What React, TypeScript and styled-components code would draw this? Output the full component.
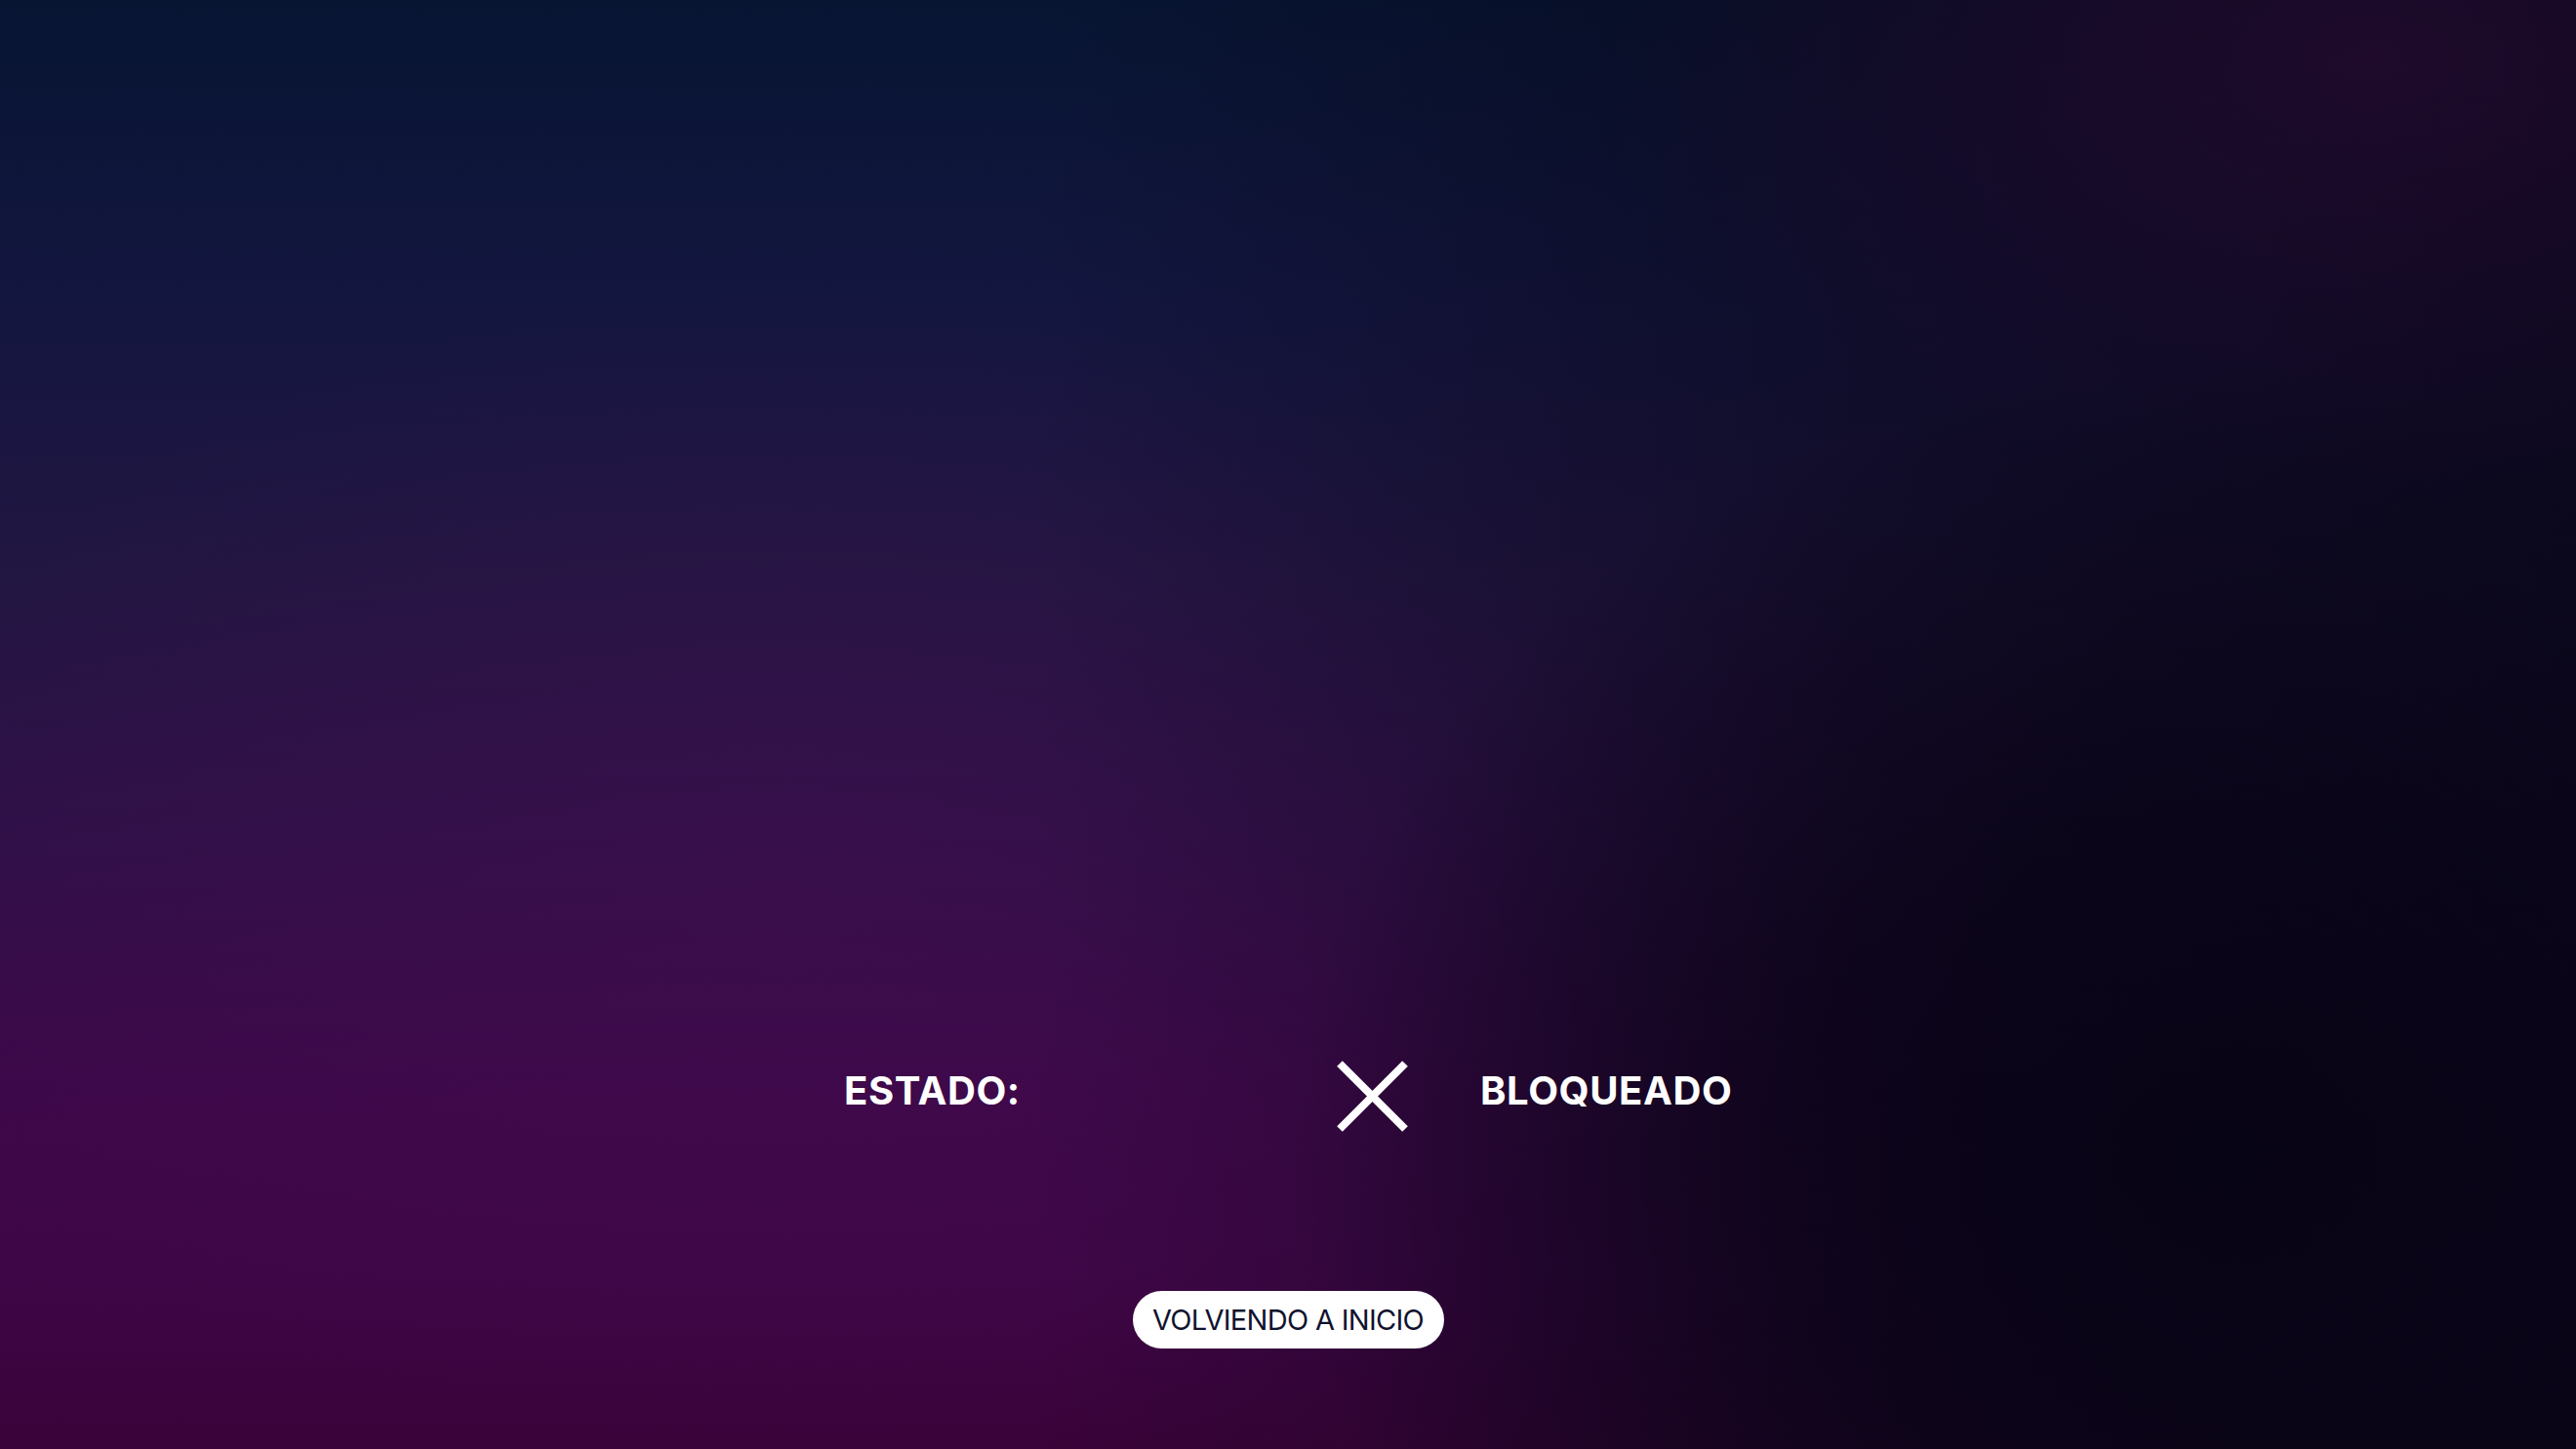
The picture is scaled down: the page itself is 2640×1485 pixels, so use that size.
import React from "react";
import styled, { createGlobalStyle } from "styled-components";

const GlobalStyle = createGlobalStyle`
  html, body, #root {
    margin: 0;
    padding: 0;
    width: 100%;
    height: 100%;
  }
  body {
    font-family: "Inter", "Liberation Sans", sans-serif;
    overflow: hidden;
  }
`;

const Screen = styled.main`
  width: 100vw;
  height: 100vh;
  box-sizing: border-box;
  display: flex;
  flex-direction: column;
  align-items: center;
  justify-content: flex-end;
  padding-bottom: 103px;
  gap: 163px;
  background:
    radial-gradient(ellipse 36% 55% at 86% 80%, rgba(6, 4, 20, 0.95) 0%, rgba(6, 4, 20, 0.7) 45%, rgba(6, 4, 20, 0) 100%),
    radial-gradient(ellipse 30% 30% at 92% 4%, rgba(40, 10, 48, 0.7) 0%, rgba(40, 10, 48, 0) 100%),
    linear-gradient(90deg, rgba(8, 5, 22, 0) 0%, rgba(8, 5, 22, 0) 40%, rgba(8, 5, 22, 0.5) 72%, rgba(8, 5, 22, 0.8) 100%),
    radial-gradient(ellipse 35% 40% at 30% 60%, rgba(70, 14, 80, 0.35) 0%, rgba(70, 14, 80, 0) 100%),
    linear-gradient(180deg, #071533 0%, #141640 22%, #221642 40%, #301048 58%, #3d0849 75%, #3f0647 88%, #3a0339 100%);
`;

const StatusRow = styled.section`
  display: flex;
  align-items: center;
  width: 910px;
`;

const Label = styled.span<{ $width?: number }>`
  font-family: "Inter", "Liberation Sans", sans-serif;
  font-weight: 700;
  font-size: 40px;
  line-height: 1;
  color: #ffffff;
  letter-spacing: 0.6px;
  padding-bottom: 11px;
  ${(p) => (p.$width ? `width: ${p.$width}px; flex: none;` : "")}
`;

const IconBox = styled.span`
  display: flex;
  width: 73px;
  height: 73px;
  margin-right: 74px;
  flex: none;
`;

const ReturnButton = styled.button`
  display: flex;
  align-items: center;
  justify-content: center;
  width: 319px;
  height: 59px;
  border: none;
  border-radius: 30px;
  background: #ffffff;
  color: #10122e;
  font-family: "Inter", "Liberation Sans", sans-serif;
  font-weight: 400;
  font-size: 29px;
  letter-spacing: -0.7px;
  padding: 0;
  cursor: pointer;
`;

const CrossIcon = () => (
  <svg width="73" height="73" viewBox="0 0 73 73" aria-hidden="true">
    <line x1="3" y1="3" x2="70" y2="70" stroke="#ffffff" strokeWidth="8" />
    <line x1="70" y1="3" x2="3" y2="70" stroke="#ffffff" strokeWidth="8" />
  </svg>
);

export default function App() {
  return (
    <>
      <GlobalStyle />
      <Screen>
        <StatusRow>
          <Label $width={505}>ESTADO:</Label>
          <IconBox>
            <CrossIcon />
          </IconBox>
          <Label>BLOQUEADO</Label>
        </StatusRow>
        <ReturnButton>VOLVIENDO A INICIO</ReturnButton>
      </Screen>
    </>
  );
}
